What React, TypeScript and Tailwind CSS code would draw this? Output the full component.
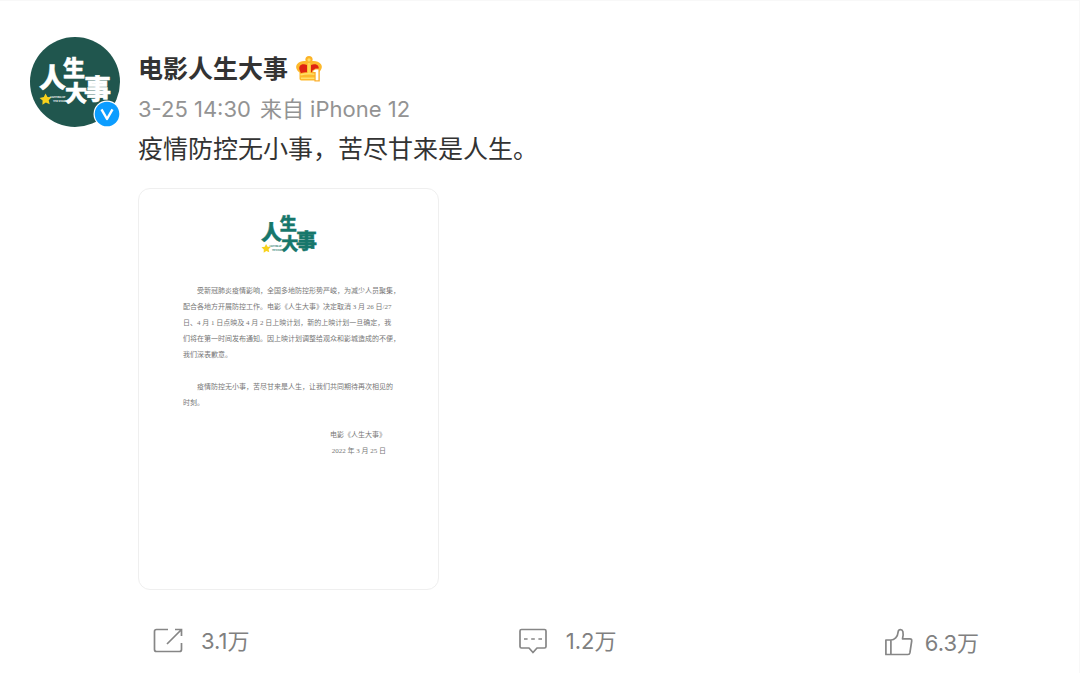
import type { ReactNode } from "react";

type LogoProps = { color: string; className: string };

function MovieLogo({ color, className }: LogoProps) {
  return (
    <svg viewBox="0 0 90 90" className={className} role="img" aria-label="人生大事">
      <g
        fill={color}
        stroke={color}
        strokeWidth="0.500"
        fontFamily="'Noto Sans CJK SC', sans-serif"
        fontWeight="900"
      >
        <text x="9" y="51" fontSize="27">人</text>
        <text x="33" y="39" fontSize="22">生</text>
        <text x="35" y="64" fontSize="22">大</text>
        <text x="54" y="62" fontSize="27">事</text>
      </g>
      <path
        d="M15.500 56.500l2 3.600 4 .2-2.800 2.900 1 4-3.800-1.600-3.500 2.200.2-4.300-3-2.600 4.200-.8z"
        fill="#f8d21c"
      />
      <g fill={color} fontFamily="Inter, sans-serif" fontWeight="700" fontSize="2.400">
        <text x="20" y="61">LIGHTING UP</text>
        <text x="23" y="65">THE STARS</text>
      </g>
    </svg>
  );
}

function VerifiedBadge() {
  return (
    <svg viewBox="0 0 28 28" className="absolute -right-px -bottom-px size-7" role="img" aria-label="认证">
      <circle cx="14" cy="14" r="13.500" fill="#fff" />
      <circle cx="14" cy="14" r="12.300" fill="#0c9dff" />
      <path d="M8.500 9.300L14 19l5.500-9.700" fill="none" stroke="#fff" strokeWidth="2.400" strokeLinejoin="round" />
    </svg>
  );
}

function Crown() {
  return (
    <svg viewBox="0 0 28 28" className="size-7" role="img" aria-label="会员 1">
      <circle cx="14" cy="4.600" r="3.600" fill="#fcb326" />
      <path
        d="M4.500 17.500C1 15 .4 11.500 2 9.300c2.300-3 6-3.800 9-3.200h6c3-.6 6.700.2 9 3.200 1.600 2.200 1 5.700-2.500 8.200v6.300q0 1.600-1.800 1.600H6.300q-1.800 0-1.800-1.600z"
        fill="#fdb92c"
      />
      <path d="M4.800 15.400c-1.600-3.600.5-6.400 4.200-6.200 2 .1 3 1 3 1v7c-2.400 0-4.400.4-6.100 1z" fill="#df2412" />
      <path d="M23.200 15.400c1.600-3.600-.5-6.400-4.200-6.200-2 .1-3 1-3 1v7c2.400 0 4.400.4 6.100 1z" fill="#df2412" />
      <path d="M14 8v10" stroke="#ffd953" strokeWidth="2.600" />
      <circle cx="14" cy="4.800" r="1.600" fill="#ffdf68" />
      <path d="M5.500 19.800q8.500-2 17 0M6 23.200h14" fill="none" stroke="#ffe06b" strokeWidth="1.400" />
      <path d="M17 18.300v-2.600l3.500-2.300h4.300v13h-5.400v-8.100z" fill="#fbb030" />
      <path d="M18.300 17v-1.200l2.400-1.400h2.700v10.900h-2.700V17z" fill="#fff" />
    </svg>
  );
}

function RepostIcon() {
  return (
    <svg viewBox="0 0 30 26" className="h-[26px] w-[30px]" fill="none" stroke="#868686" strokeWidth="1.700" aria-hidden="true">
      <path d="M15 1.500H3.500q-2 0-2 2v18q0 2 2 2h23q2 0 2-2V15M14 16L28 2M22 1.500h6.500V8" />
    </svg>
  );
}

function CommentIcon() {
  return (
    <svg viewBox="0 0 30 26" className="h-[26px] w-[30px]" fill="none" stroke="#868686" strokeWidth="1.700" strokeLinejoin="round" aria-hidden="true">
      <path d="M3.500 1.500h23q1.500 0 1.500 1.500v15.500q0 1.500-1.500 1.500H19l-4 4.500-4-4.500H3.500Q2 20 2 18.500V3q0-1.500 1.500-1.500z" />
      <path d="M6 11h3.600M13.200 11h3.600M20.400 11H24" />
    </svg>
  );
}

function LikeIcon() {
  return (
    <svg viewBox="1 0 28 30" className="h-[30px] w-7" fill="none" stroke="#868686" strokeWidth="1.700" strokeLinejoin="round" aria-hidden="true">
      <path d="M7 12H1.900v14.500H24q1.600 0 1.900-1.600L27.700 13q.3-2.200-1.800-2.200h-7.400c.7-2.400.9-5 .4-7.200-.6-2.500-4.300-2.700-4.700 0-.3 3-.8 4.700-2.500 6.300C10.300 11.200 8.700 12 7 12zM6.900 12v14.500" />
    </svg>
  );
}

type ActionProps = { icon: ReactNode; label: string; count: string; gap?: string };

function Action({ icon, label, count, gap = "gap-[18px]" }: ActionProps) {
  return (
    <button type="button" aria-label={`${label} ${count}`} className={`flex items-center ${gap} text-[22px] leading-6 text-[#808080]`}>
      {icon}
      <span>{count}</span>
    </button>
  );
}

const notice = [
  "配合各地方开展防控工作。电影《人生大事》决定取消 3 月 26 日/27",
  "日、4 月 1 日点映及 4 月 2 日上映计划，新的上映计划一旦确定，我",
  "们将在第一时间发布通知。因上映计划调整给观众和影城造成的不便，",
  "我们深表歉意。",
];

function Letter() {
  return (
    <a
      href="#notice"
      className="mt-[19px] flex h-[402px] w-[301px] flex-col rounded-xl border border-[#efefef] px-11 pt-[11px] font-['Liberation_Serif','Noto_Sans_CJK_SC',serif] text-[7px] leading-4 whitespace-nowrap text-[#777]"
    >
      <MovieLogo color="#17776b" className="size-[70px] self-center" />
      <span className="mt-[13px] indent-[14px]">受新冠肺炎疫情影响，全国多地防控形势严峻，为减少人员聚集，</span>
      {notice.map((line) => (
        <span key={line}>{line}</span>
      ))}
      <span className="mt-4 indent-[14px]">疫情防控无小事，苦尽甘来是人生，让我们共同期待再次相见的</span>
      <span>时刻。</span>
      <span className="mt-4 pr-2 text-right">电影《人生大事》</span>
      <span className="pr-2 text-right">2022 年 3 月 25 日</span>
    </a>
  );
}

export default function App() {
  return (
    <article lang="zh-CN" className="border-t border-r border-[#f8f8f8] bg-white pt-9 pb-4 font-['Inter','Noto_Sans_CJK_SC',sans-serif]">
      <div className="flex gap-[18px] px-[30px]">
        <a href="#profile" className="relative size-[90px] shrink-0 rounded-full bg-[#20564e]">
          <MovieLogo color="#ffffff" className="size-full" />
          <VerifiedBadge />
        </a>
        <div className="min-w-0 flex-1">
          <h1 className="flex h-16 items-center gap-[7px] text-[25px] leading-10 font-bold text-[#333]">
            <a href="#profile">电影人生大事</a>
            <Crown />
          </h1>
          <p className="-mt-2 flex gap-[9px] text-[22px] leading-8 text-[#939393]">
            <time>3-25 14:30</time>
            <span>来自 iPhone 12</span>
          </p>
          <p className="mt-1 text-[25px] leading-10 text-[#333]">疫情防控无小事，苦尽甘来是人生。</p>
          <Letter />
        </div>
      </div>
      <footer className="mt-[38px] flex items-start justify-between pr-[100px] pl-[153px]">
        <Action icon={<RepostIcon />} label="转发" count="3.1万" />
        <Action icon={<CommentIcon />} label="评论" count="1.2万" />
        <Action icon={<LikeIcon />} label="赞" count="6.3万" gap="gap-3" />
      </footer>
    </article>
  );
}
